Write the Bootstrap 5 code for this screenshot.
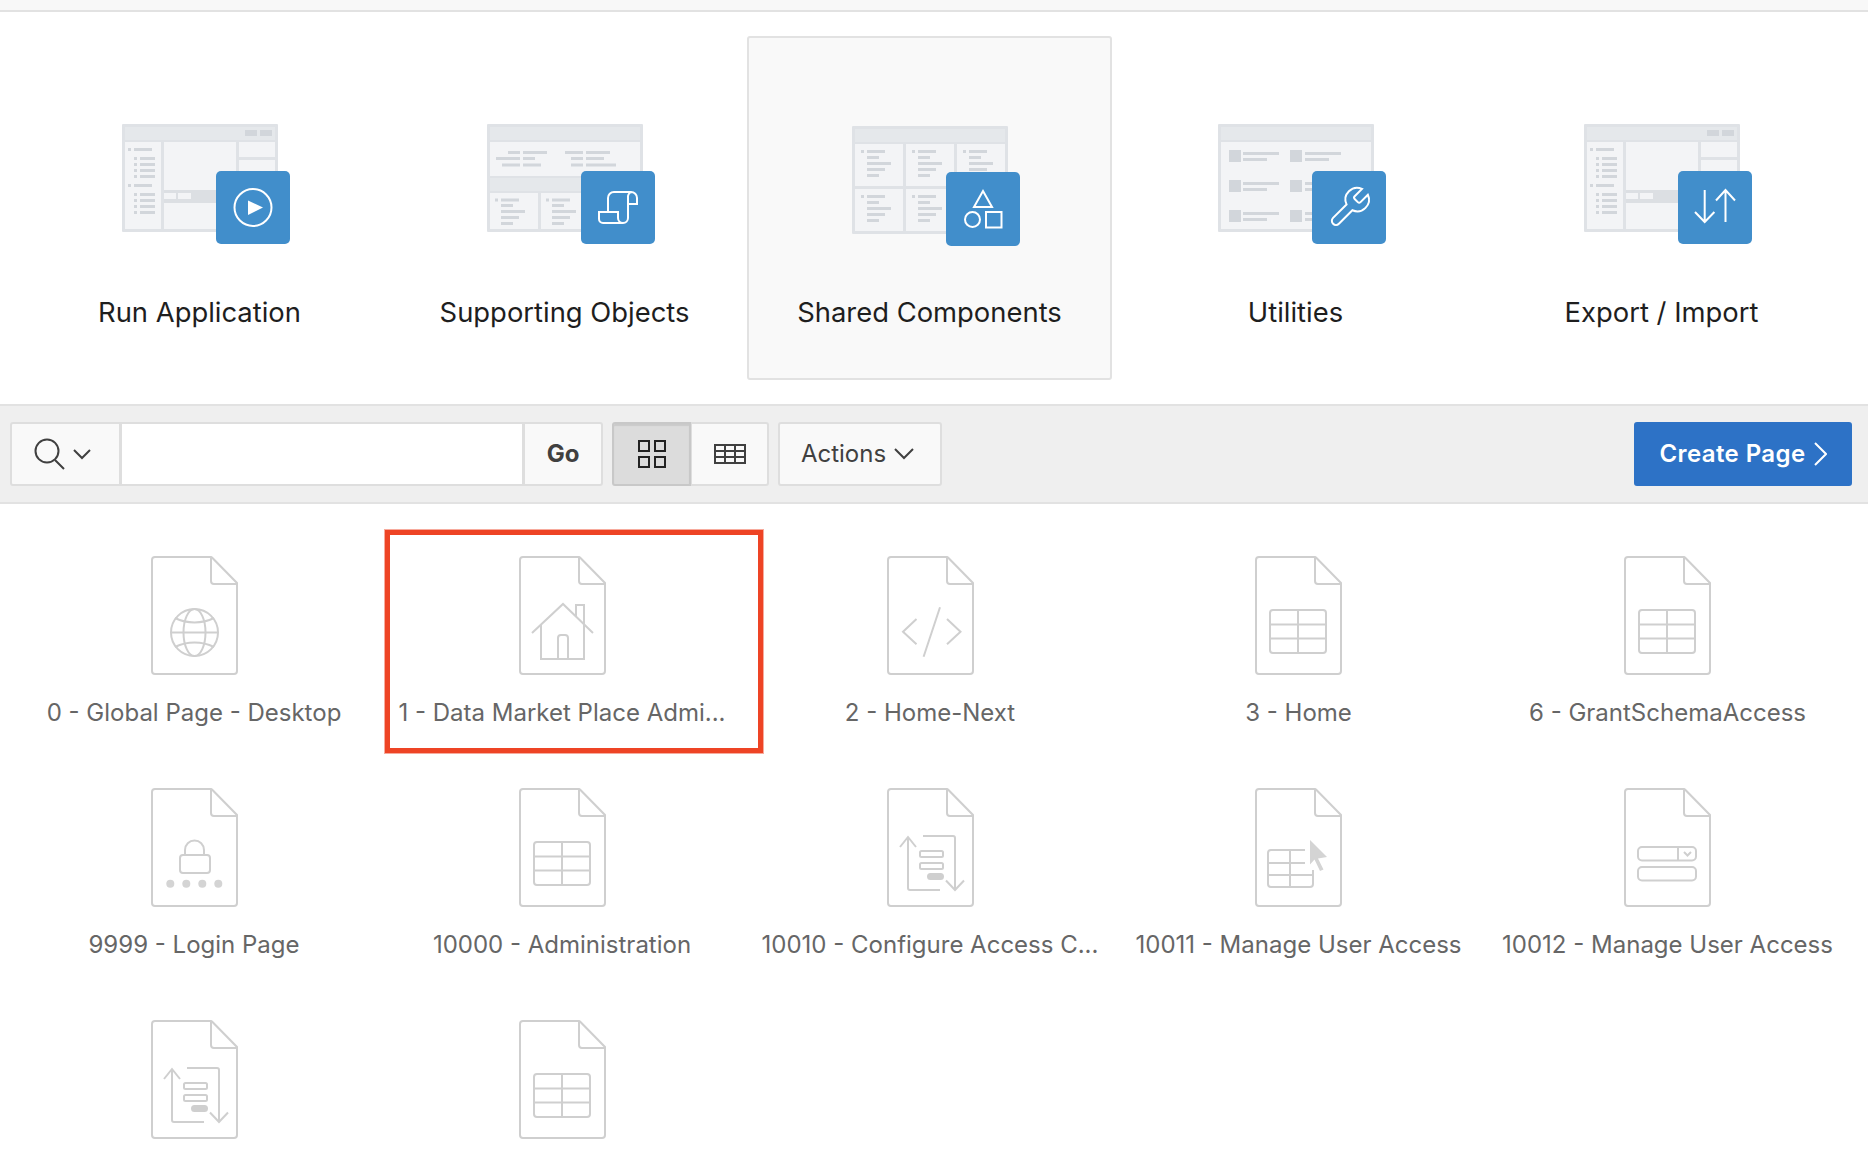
<!DOCTYPE html>
<html lang="en">

<head>
    <meta charset="UTF-8" />
    <meta name="viewport" content="width=device-width, initial-scale=1.0" />
    <title>Application Home</title>
    <link href="https://cdn.jsdelivr.net/npm/bootstrap@5.3.2/dist/css/bootstrap.min.css" rel="stylesheet" />
    <style>
        html,
        body {
            height: 1154px;
            overflow: hidden;
        }

        body {
            background-color: #fff;
            font-family: Inter, "Liberation Sans", sans-serif;
        }

        .top-strip {
            height: 12px;
            background-color: #f8f8f8;
            border-bottom: 2px solid #e2e2e2;
        }

        /* big application tiles */
        .app-tiles {
            display: grid;
            grid-template-columns: 365px 365px 365px 367px 365px;
            padding: 24px 0 24px 17px;
        }

        .app-tile {
            height: 344px;
            padding-top: 88px;
            text-align: center;
            border-radius: 3px;
        }

        .app-tile.is-current {
            background-color: #f9f9f9;
            border: 2px solid #e2e2e2;
        }

        .app-art {
            position: relative;
            width: 156px;
            height: 108px;
            margin: 0 auto;
        }

        .app-art svg {
            display: block;
        }

        .app-badge {
            position: absolute;
            left: 94px;
            top: 47px;
            width: 74px;
            height: 73px;
            background-color: #418ecb;
            border-radius: 5px;
        }

        .is-current .app-badge {
            top: 46px;
            height: 74px;
        }

        .app-badge svg {
            fill: none;
            stroke: #fff;
            stroke-width: 2;
        }

        .app-name {
            margin-top: 64px;
            font-size: 27.400px;
            line-height: 32px;
            color: #1e1e1e;
        }

        .is-current .app-name {
            margin-top: 62px;
        }

        /* toolbar */
        .page-toolbar {
            height: 100px;
            padding: 16px 16px 16px 10px;
            gap: 9px;
            background-color: #efefef;
            border-top: 2px solid #e2e2e2;
            border-bottom: 2px solid #e2e2e2;
        }

        .page-toolbar .btn {
            height: 64px;
            font-size: 24px;
            color: #404040;
            background-color: #f9f9f9;
            border: 2px solid #dedede;
            border-radius: 3px;
        }

        .page-toolbar .form-control {
            height: 64px;
            border: 2px solid #dedede;
            border-radius: 0;
        }

        .search-group {
            width: 593px;
        }

        .search-group .btn-search {
            width: 111px;
            padding: 0 5px 0 0;
        }

        .search-group .btn-go {
            width: 80px;
            padding: 0;
            font-weight: 700;
        }

        .view-toggle .btn {
            width: 79px;
            padding: 0;
        }

        .view-toggle .btn.active {
            background-color: #dcdcdc;
            border-color: #c8c8c8;
            box-shadow: inset 0 2px 1px rgba(0, 0, 0, .08);
        }

        .page-toolbar .btn-actions {
            width: 164px;
            padding: 0 5px 0 0;
        }

        .page-toolbar .btn-create {
            width: 218px;
            padding: 0;
            color: #fff;
            font-weight: 600;
            letter-spacing: .4px;
            background-color: #2d72c6;
            border-color: #2d72c6;
        }

        .page-toolbar svg {
            fill: none;
            stroke: currentColor;
            stroke-width: 2;
        }

        /* page icons */
        .page-icons {
            display: grid;
            grid-template-columns: 368px 368px 368px 369px 369px;
            grid-template-rows: 232px 232px 134px;
            padding: 52px 0 0 10px;
        }

        .page-item {
            position: relative;
            text-align: center;
        }

        .page-item svg {
            display: block;
            margin: 0 auto;
            fill: none;
            stroke: #cfcfcf;
            stroke-width: 2;
        }

        .page-label {
            margin-top: 23px;
            font-size: 24px;
            line-height: 30px;
            color: #666;
            white-space: nowrap;
        }

        .mark-box {
            position: absolute;
            left: 7px;
            top: -26px;
            width: 378px;
            height: 223px;
            border: 5px solid #ee4425;
            box-shadow: 0 0 0 1px rgba(238, 68, 37, .45);
        }
    </style>
</head>

<body>
    <!-- shared svg pieces -->
    <svg class="d-none">
        <symbol id="file" viewBox="0 0 87 119">
            <path d="M60 1H4a3 3 0 0 0-3 3v111a3 3 0 0 0 3 3h79a3 3 0 0 0 3-3V27L62 2.500a4 4 0 0 0-2-1.500v24a3 3 0 0 0 3 3h23" />
        </symbol>
        <symbol id="thumb-frame" viewBox="0 0 156 108">
            <rect width="156" height="108" rx="1" fill="#dfe2e6" stroke="none" />
            <rect x="3" y="3" width="150" height="13" fill="#e5e8eb" stroke="none" />
        </symbol>
    </svg>

    <div class="top-strip"></div>

    <!-- application tiles -->
    <div class="app-tiles">
        <div class="app-tile">
            <div class="app-art">
                <svg width="156" height="108" viewBox="0 0 156 108">
                    <use href="#thumb-frame" />
                    <g fill="#f3f4f6">
                        <rect x="3" y="18" width="36" height="87" />
                        <rect x="42" y="18" width="72" height="48" />
                        <rect x="42" y="79" width="72" height="26" />
                        <rect x="117" y="18" width="36" height="15" />
                        <rect x="117" y="36" width="36" height="69" />
                    </g>
                    <rect x="42" y="66" width="72" height="13" fill="#dcdfe3" />
                    <g fill="#f3f4f6">
                        <rect x="42" y="69" width="12" height="6" />
                        <rect x="56" y="69" width="13" height="6" />
                    </g>
                    <path stroke="#d2d6db" stroke-width="6" d="M123 9h12M138 9h12" />
                    <path stroke="#d2d6db" stroke-width="3" d="M6 25.500h3M12 25.500h18M12 34.500h3M18 34.500h15M12 40.500h3M18 40.500h15M12 46.500h3M18 46.500h15M12 52.500h3M18 52.500h15M6 61.500h3M12 61.500h18M12 70.500h3M18 70.500h15M12 76.500h3M18 76.500h15M12 82.500h3M18 82.500h15M12 88.500h3M18 88.500h15" />
                </svg>
                <div class="app-badge">
                    <svg width="74" height="73" viewBox="0 0 74 73">
                        <circle cx="37" cy="36.500" r="18.500" />
                        <path fill="#fff" stroke="none" d="M32 29.500l15 7-15 7.500z" />
                    </svg>
                </div>
            </div>
            <div class="app-name">Run Application</div>
        </div>

        <div class="app-tile">
            <div class="app-art">
                <svg width="156" height="108" viewBox="0 0 156 108">
                    <use href="#thumb-frame" />
                    <rect x="3" y="18" width="150" height="34" fill="#f3f4f6" />
                    <rect x="3" y="54" width="150" height="13" fill="#e5e8eb" />
                    <rect x="3" y="69" width="48" height="36" fill="#f3f4f6" />
                    <rect x="54" y="69" width="99" height="36" fill="#f3f4f6" />
                    <path stroke="#d2d6db" stroke-width="3" d="M21 28.500h12M36 28.500h24M78 28.500h18M99 28.500h24M9 34.500h24M36 34.500h12M84 34.500h12M99 34.500h18M15 41h18M36 41h18M84 41h12M99 41h30" />
                    <path stroke="#d2d6db" stroke-width="3" d="M8 76h3M14 76h18M14 81.500h12M14 87.500h24M14 93.500h18M14 99.500h12M59 76h3M65 76h18M65 81.500h12M65 87.500h24M65 93.500h18M65 99.500h12" />
                </svg>
                <div class="app-badge">
                    <svg width="74" height="73" viewBox="0 0 74 73">
                        <path d="M27 41V27a6 6 0 0 1 6-6h17a6 6 0 0 1 6 6v6h-9V27a6 6 0 0 1 3-6" />
                        <path d="M47 33v14a5 5 0 0 1-5 5H22a4 4 0 0 1-4-4v-7h19v6a5 5 0 0 0 5 5" />
                    </svg>
                </div>
            </div>
            <div class="app-name">Supporting Objects</div>
        </div>

        <div class="app-tile is-current">
            <div class="app-art">
                <svg width="156" height="108" viewBox="0 0 156 108">
                    <use href="#thumb-frame" />
                    <g fill="#f3f4f6">
                        <rect x="3" y="18" width="48" height="42" />
                        <rect x="54" y="18" width="48" height="42" />
                        <rect x="105" y="18" width="48" height="42" />
                        <rect x="3" y="63" width="48" height="42" />
                        <rect x="54" y="63" width="48" height="42" />
                        <rect x="105" y="63" width="48" height="42" />
                    </g>
                    <path stroke="#d2d6db" stroke-width="3" d="M9 25.500h3M15 25.500h18M15 31.500h12M15 37.500h24M15 43.500h18M15 49.500h12M60 25.500h3M66 25.500h18M66 31.500h12M66 37.500h24M66 43.500h18M66 49.500h12M111 25.500h3M117 25.500h18M117 31.500h12M117 37.500h24M117 43.500h18M9 70.500h3M15 70.500h18M15 76.500h12M15 82.500h24M15 88.500h18M15 94.500h12M60 70.500h3M66 70.500h18M66 76.500h12M66 82.500h24M66 88.500h18M66 94.500h12" />
                </svg>
                <div class="app-badge">
                    <svg width="74" height="74" viewBox="0 0 74 74">
                        <path d="M37 19l9 16H28z" />
                        <circle cx="26.500" cy="47.500" r="7.500" />
                        <rect x="40" y="40" width="15.500" height="15.500" />
                    </svg>
                </div>
            </div>
            <div class="app-name">Shared Components</div>
        </div>

        <div class="app-tile">
            <div class="app-art">
                <svg width="156" height="108" viewBox="0 0 156 108">
                    <use href="#thumb-frame" />
                    <rect x="3" y="18" width="150" height="87" fill="#f3f4f6" />
                    <g fill="#d2d6db">
                        <rect x="11" y="26" width="12" height="12" />
                        <rect x="72" y="26" width="12" height="12" />
                        <rect x="11" y="56" width="12" height="12" />
                        <rect x="72" y="56" width="12" height="12" />
                        <rect x="11" y="86" width="12" height="12" />
                        <rect x="72" y="86" width="12" height="12" />
                    </g>
                    <path stroke="#d2d6db" stroke-width="3" d="M25 29.500h36M25 35.500h24M87 29.500h36M87 35.500h24M25 59.500h36M25 65.500h24M87 59.500h36M87 65.500h24M25 89.500h36M25 95.500h24M87 89.500h36M87 95.500h24" />
                </svg>
                <div class="app-badge">
                    <svg width="74" height="73" viewBox="0 0 74 73">
                        <path transform="translate(14 13) scale(1.950)" stroke-width="1.030" d="M14.700 6.300a1 1 0 0 0 0 1.400l1.600 1.600a1 1 0 0 0 1.400 0l3.770-3.770a6 6 0 0 1-7.940 7.940l-6.910 6.910a2.120 2.120 0 0 1-3-3l6.910-6.910a6 6 0 0 1 7.940-7.940l-3.760 3.760z" />
                    </svg>
                </div>
            </div>
            <div class="app-name">Utilities</div>
        </div>

        <div class="app-tile">
            <div class="app-art">
                <svg width="156" height="108" viewBox="0 0 156 108">
                    <use href="#thumb-frame" />
                    <g fill="#f3f4f6">
                        <rect x="3" y="18" width="36" height="87" />
                        <rect x="42" y="18" width="72" height="48" />
                        <rect x="42" y="79" width="72" height="26" />
                        <rect x="117" y="18" width="36" height="15" />
                        <rect x="117" y="36" width="36" height="69" />
                    </g>
                    <rect x="42" y="66" width="72" height="13" fill="#dcdfe3" />
                    <g fill="#f3f4f6">
                        <rect x="42" y="69" width="12" height="6" />
                        <rect x="56" y="69" width="13" height="6" />
                    </g>
                    <path stroke="#d2d6db" stroke-width="6" d="M123 9h12M138 9h12" />
                    <path stroke="#d2d6db" stroke-width="3" d="M6 25.500h3M12 25.500h18M12 34.500h3M18 34.500h15M12 40.500h3M18 40.500h15M12 46.500h3M18 46.500h15M12 52.500h3M18 52.500h15M6 61.500h3M12 61.500h18M12 70.500h3M18 70.500h15M12 76.500h3M18 76.500h15M12 82.500h3M18 82.500h15M12 88.500h3M18 88.500h15" />
                </svg>
                <div class="app-badge">
                    <svg width="74" height="73" viewBox="0 0 74 73">
                        <path d="M26.700 19v32M17 41l9.700 10 9.700-10M47.500 51V19M38 29.500L47.500 19 57 29.500" />
                    </svg>
                </div>
            </div>
            <div class="app-name">Export / Import</div>
        </div>
    </div>

    <!-- toolbar -->
    <div class="page-toolbar d-flex align-items-start">
        <div class="input-group search-group flex-nowrap">
            <button type="button" class="btn btn-search d-flex align-items-center justify-content-center">
                <svg width="58" height="34" viewBox="0 0 58 34">
                    <circle cx="13" cy="14" r="11.500" />
                    <path d="M21 23l9 9M40 13l8 8 8-8" />
                </svg>
            </button>
            <input type="text" class="form-control" />
            <button type="button" class="btn btn-go">Go</button>
        </div>
        <div class="btn-group view-toggle">
            <button type="button" class="btn active d-flex align-items-center justify-content-center">
                <svg width="28" height="28" viewBox="0 0 28 28" color="#222">
                    <rect x="1" y="1" width="10" height="10" />
                    <rect x="17" y="1" width="10" height="10" />
                    <rect x="1" y="17" width="10" height="10" />
                    <rect x="17" y="17" width="10" height="10" />
                </svg>
            </button>
            <button type="button" class="btn d-flex align-items-center justify-content-center">
                <svg width="32" height="20" viewBox="0 0 32 20">
                    <rect x="1" y="1" width="30" height="18" />
                    <path d="M1 7h30M1 13h30M11 1v18M21 1v18" />
                </svg>
            </button>
        </div>
        <button type="button" class="btn btn-actions d-flex align-items-center justify-content-center gap-2">
            Actions
            <svg width="20" height="12" viewBox="0 0 20 12">
                <path d="M1 1l9 9 9-9" />
            </svg>
        </button>
        <button type="button" class="btn btn-create ms-auto d-flex align-items-center justify-content-center gap-2">
            Create Page
            <svg width="13" height="24" viewBox="0 0 13 24">
                <path d="M1 1l11 11L1 23" />
            </svg>
        </button>
    </div>

    <!-- page icons -->
    <div class="page-icons">
        <div class="page-item">
            <svg width="87" height="119" viewBox="0 0 87 119">
                <use href="#file" />
                <circle cx="43.500" cy="76.500" r="23.500" />
                <ellipse cx="43.500" cy="76.500" rx="11" ry="23.500" />
                <path d="M20 76.500h47M24 62c12 6 27 6 39 0M24 91c12-6 27-6 39 0" />
            </svg>
            <div class="page-label">0 - Global Page - Desktop</div>
        </div>
        <div class="page-item">
            <svg width="87" height="119" viewBox="0 0 87 119">
                <use href="#file" />
                <path d="M13 77l31-29 30 29M22 69v34h43V68M39 103V82a3 3 0 0 1 3-3h4a3 3 0 0 1 3 3v21M57 61V49h8v20" />
            </svg>
            <div class="page-label">1 - Data Market Place Admi...</div>
            <div class="mark-box"></div>
        </div>
        <div class="page-item">
            <svg width="87" height="119" viewBox="0 0 87 119">
                <use href="#file" />
                <path d="M29.500 63L16 75.700l13.500 12.600M53 51.300l-16.400 49.400M60 63l13.500 12.700L60 88.300" />
            </svg>
            <div class="page-label">2 - Home-Next</div>
        </div>
        <div class="page-item">
            <svg width="87" height="119" viewBox="0 0 87 119">
                <use href="#file" />
                <rect x="15" y="54" width="56" height="43" rx="3" />
                <path d="M15 68.500h56M15 82.500h56M43 54v43" />
            </svg>
            <div class="page-label">3 - Home</div>
        </div>
        <div class="page-item">
            <svg width="87" height="119" viewBox="0 0 87 119">
                <use href="#file" />
                <rect x="15" y="54" width="56" height="43" rx="3" />
                <path d="M15 68.500h56M15 82.500h56M43 54v43" />
            </svg>
            <div class="page-label">6 - GrantSchemaAccess</div>
        </div>

        <div class="page-item">
            <svg width="87" height="119" viewBox="0 0 87 119">
                <use href="#file" />
                <rect x="29" y="67" width="30" height="18" rx="3" />
                <path d="M34 67v-5a9.500 9.500 0 0 1 19 0v5" />
                <g fill="#d4d4d4" stroke="none">
                    <circle cx="19.300" cy="95.700" r="4" />
                    <circle cx="35.300" cy="95.700" r="4" />
                    <circle cx="51.300" cy="95.700" r="4" />
                    <circle cx="67.300" cy="95.700" r="4" />
                </g>
            </svg>
            <div class="page-label">9999 - Login Page</div>
        </div>
        <div class="page-item">
            <svg width="87" height="119" viewBox="0 0 87 119">
                <use href="#file" />
                <rect x="15" y="54" width="56" height="43" rx="3" />
                <path d="M15 68.500h56M15 82.500h56M43 54v43" />
            </svg>
            <div class="page-label">10000 - Administration</div>
        </div>
        <div class="page-item">
            <svg width="87" height="119" viewBox="0 0 87 119">
                <use href="#file" />
                <path d="M13 59l8-10 8 10M21 49v51a2 2 0 0 0 2 2h30M36 48h30a2 2 0 0 1 2 2v52M59 92.500l9 9.500 9-9.500" />
                <rect x="33" y="63" width="23" height="6" rx="1.500" />
                <rect x="33" y="75" width="23" height="6" rx="1.500" />
                <rect x="41" y="86" width="15" height="5" rx="2.500" fill="#cfcfcf" />
            </svg>
            <div class="page-label">10010 - Configure Access C...</div>
        </div>
        <div class="page-item">
            <svg width="87" height="119" viewBox="0 0 87 119">
                <use href="#file" />
                <path d="M50 62H16a3 3 0 0 0-3 3v31a3 3 0 0 0 3 3h39a3 3 0 0 0 3-3V82M13 75h37M13 87h45M35 62v37" />
                <path fill="#d4d4d4" stroke="none" d="M55 52l17 17-9 1.500 5.500 11-3.500 1.500-5.500-11.500-4.500 5z" />
            </svg>
            <div class="page-label">10011 - Manage User Access</div>
        </div>
        <div class="page-item">
            <svg width="87" height="119" viewBox="0 0 87 119">
                <use href="#file" />
                <rect x="14" y="59" width="58" height="13.500" rx="4" />
                <rect x="14" y="79" width="58" height="13.500" rx="4" />
                <path d="M54 59v13.500M60 64l3.500 3.500L67 64" />
            </svg>
            <div class="page-label">10012 - Manage User Access</div>
        </div>

        <div class="page-item">
            <svg width="87" height="119" viewBox="0 0 87 119">
                <use href="#file" />
                <path d="M13 59l8-10 8 10M21 49v51a2 2 0 0 0 2 2h30M36 48h30a2 2 0 0 1 2 2v52M59 92.500l9 9.500 9-9.500" />
                <rect x="33" y="63" width="23" height="6" rx="1.500" />
                <rect x="33" y="75" width="23" height="6" rx="1.500" />
                <rect x="41" y="86" width="15" height="5" rx="2.500" fill="#cfcfcf" />
            </svg>
        </div>
        <div class="page-item">
            <svg width="87" height="119" viewBox="0 0 87 119">
                <use href="#file" />
                <rect x="15" y="54" width="56" height="43" rx="3" />
                <path d="M15 68.500h56M15 82.500h56M43 54v43" />
            </svg>
        </div>
    </div>

    <script src="https://cdn.jsdelivr.net/npm/bootstrap@5.3.2/dist/js/bootstrap.bundle.min.js"></script>
</body>

</html>
